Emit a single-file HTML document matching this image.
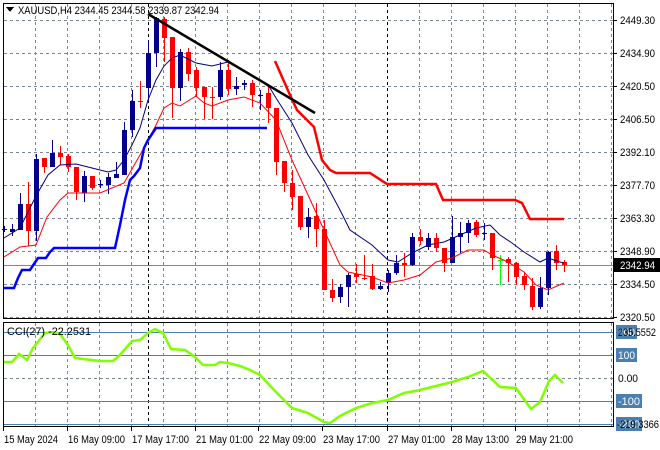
<!DOCTYPE html>
<html><head><meta charset="utf-8"><style>
html,body{margin:0;padding:0;background:#fff;width:660px;height:450px;overflow:hidden}
svg{display:block;font-family:"Liberation Sans",sans-serif}
</style></head><body>
<svg id="s" width="660" height="450" viewBox="0 0 660 450" shape-rendering="crispEdges">
<rect width="660" height="450" fill="#fff"/>
<g id="grid" stroke="#7a8794" stroke-dasharray="3,3" stroke-width="1"></g>
<line x1="148.5" y1="4" x2="148.5" y2="427" stroke="#000" stroke-dasharray="3,3"/>
<line x1="387.5" y1="4" x2="387.5" y2="427" stroke="#000" stroke-dasharray="3,3"/>
<line x1="4" y1="265.5" x2="613" y2="265.5" stroke="#7f8a94"/>
<g id="lv" stroke="#4a7fb0"></g>
<g id="cd"></g>
<g shape-rendering="auto" fill="none">
<polyline id="bma" stroke="#000080" stroke-width="1"/>
<polyline id="rma" stroke="#ff0000" stroke-width="1"/>
<polyline id="bst" stroke="#0000ff" stroke-width="2.5"/>
<polyline id="rst" stroke="#ff0000" stroke-width="2.5"/>
<line x1="148" y1="14" x2="315" y2="113" stroke="#000" stroke-width="2.5"/>
<polyline id="cci" stroke="#7fff00" stroke-width="2.5"/>
</g>
<rect x="3.5" y="3.5" width="610" height="315" fill="none" stroke="#000"/>
<rect x="3.5" y="322.5" width="610" height="104" fill="none" stroke="#000"/>
<g id="ax" font-size="11" fill="#000"></g>
<polygon points="6,7 14,7 10,12" fill="#000"/>
<text x="18" y="14" font-size="11" textLength="201" lengthAdjust="spacingAndGlyphs">XAUUSD,H4  2344.45 2344.58 2339.87 2342.94</text>
<text x="7" y="335" font-size="11" textLength="84" lengthAdjust="spacingAndGlyphs">CCI(27) -22.2531</text>
</svg>
<script>
const NS="http://www.w3.org/2000/svg";
function el(p,t,a,txt){const e=document.createElementNS(NS,t);for(const k in a)e.setAttribute(k,a[k]);if(txt!==undefined)e.textContent=txt;p.appendChild(e);return e;}
const g=document.getElementById('grid');
const hy=[20,53,86,119,152,185,218,251,284,317];
hy.forEach(y=>el(g,'line',{x1:4,x2:613,y1:y+.5,y2:y+.5}));
for(let x=35;x<613;x+=32){el(g,'line',{x1:x+.5,x2:x+.5,y1:4,y2:318});el(g,'line',{x1:x+.5,x2:x+.5,y1:323,y2:426});}
el(g,'line',{x1:4,x2:613,y1:378.5,y2:378.5});
const lv=document.getElementById('lv');
[332,355,401,424].forEach(y=>el(lv,'line',{x1:4,x2:613,y1:y+.5,y2:y+.5}));
const C=[
[230,229,226,232,'b'],[232,229,224,236,'b'],[230,204,193,230,'b'],[204,231,182,246,'r'],[231,159,154,241,'b'],
[158,167,158,173,'r'],[167,153,140,167,'b'],[153,157,146,165,'r'],[156,167,154,172,'r'],[167,192,167,200,'r'],
[193,176,171,202,'b'],[176,188,176,190,'r'],[185,184,180,188,'b'],[185,177,173,194,'b'],[178,174,162,178,'b'],
[175,130,122,175,'b'],[130,101,90,137,'b'],[101,102,81,108,'r'],[88,53,40,100,'b'],[53,18,17,67,'b'],
[19,38,17,62,'r'],[37,88,37,118,'r'],[88,52,49,101,'b'],[52,74,48,81,'r'],[70,88,67,97,'r'],
[87,97,87,119,'r'],[97,98,87,119,'r'],[97,70,62,100,'b'],[70,89,60,95,'r'],[89,86,77,95,'b'],
[85,83,80,90,'b'],[83,95,80,107,'r'],[95,95,90,110,'b'],[93,108,87,123,'r'],[108,162,108,175,'r'],
[161,183,161,192,'r'],[183,197,170,210,'r'],[196,227,196,230,'r'],[227,217,208,238,'b'],[216,229,203,247,'r'],
[229,290,220,290,'r'],[290,298,279,302,'r'],[297,287,284,303,'b'],[287,275,273,307,'b'],[274,277,264,283,'r'],
[278,279,255,280,'r'],[276,289,264,290,'r'],[289,286,282,290,'b'],[283,273,270,292,'b'],[273,263,255,275,'b'],
[263,265,253,277,'r'],[265,237,233,266,'b'],[237,241,229,245,'r'],[247,238,233,250,'b'],[238,248,233,252,'r'],
[248,263,248,272,'r'],[263,237,216,263,'b'],[237,233,222,253,'b'],[233,223,220,243,'b'],[222,235,220,237,'r'],
[233,233,223,240,'b'],[233,258,233,270,'r'],[260,260,255,285,'g'],[259,263,257,282,'r'],[263,277,262,285,'r'],
[276,285,273,290,'r'],[286,307,278,310,'r'],[307,288,277,309,'b'],[288,252,251,295,'b'],[251,263,245,270,'r'],
[262,265,260,272,'r']];
const cd=document.getElementById('cd');
const col={b:'#00008b',r:'#ff0000',g:'#00ff00'};
C.forEach((c,k)=>{const x=4+8*k;const cl=col[c[4]];
el(cd,'rect',{x:x,y:c[2],width:1,height:Math.max(1,c[3]-c[2]),fill:cl});
const t=Math.min(c[0],c[1]),b=Math.max(c[0],c[1]);
if(b-t<=1) el(cd,'rect',{x:x-2,y:t,width:5,height:1,fill:cl});
else el(cd,'rect',{x:x-2,y:t,width:5,height:b-t,fill:cl});});
function pl(id,pts){document.getElementById(id).setAttribute('points',pts.map(p=>p.join(',')).join(' '));}
pl('bma',[[4,238],[20,228],[36,196],[48,175],[60,165],[76,164],[92,168],[108,172],[116,170],[124,160],[132,145],[140,128],[148,100],[156,80],[164,66],[172,58],[180,55],[196,63],[212,66],[228,62],[244,70],[260,80],[270,88],[276,98],[292,123],[308,155],[324,180],[340,210],[350,230],[372,245],[388,260],[398,262],[412,253],[428,245],[444,242],[460,235],[476,228],[490,225],[500,235],[512,243],[524,252],[540,262],[548,258],[560,262],[564,263]]);
pl('rma',[[4,257],[20,247],[36,245],[47,217],[60,200],[68,193],[100,193],[124,183],[140,155],[156,125],[164,108],[172,103],[180,106],[196,96],[204,103],[212,106],[228,100],[244,97],[260,103],[276,120],[292,160],[308,195],[324,230],[340,265],[348,272],[372,277],[388,283],[404,280],[420,275],[436,262],[452,258],[468,250],[484,250],[492,255],[508,262],[524,272],[536,285],[548,290],[564,283]]);
pl('bst',[[4,288],[14,288],[18,278],[22,270],[30,270],[34,264],[38,258],[46,258],[50,252],[54,248],[115,248],[120,225],[125,200],[130,180],[134,176],[140,168],[144,148],[148,140],[152,134],[156,128],[267,128]]);
pl('rst',[[275,61],[290,95],[297,110],[314,127],[322,160],[330,170],[336,173],[370,173],[387,184],[436,184],[443,200],[515,200],[522,203],[530,219],[564,219]]);
pl('cci',[[4,362],[12,362],[19,354],[27,360],[33,348],[45,333],[53,332],[60,334],[68,345],[75,358],[83,359],[100,361],[113,361],[120,355],[132,341],[140,340],[148,333],[155,329],[163,333],[171,349],[185,350],[195,357],[203,365],[215,365],[220,362],[228,363],[240,366],[250,370],[260,375],[276,392],[292,408],[308,413],[324,422],[330,423],[340,416],[356,408],[372,403],[388,400],[404,393],[420,390],[436,386],[452,382],[468,377],[483,371],[500,387],[516,388],[531,409],[540,402],[549,381],[555,375],[563,383]]);
const ax=document.getElementById('ax');
const pr=['2449.30','2434.90','2420.50','2406.50','2392.10','2377.70','2363.30','2348.90','2334.50','2320.50'];
pr.forEach((t,i)=>{el(ax,'line',{x1:613,x2:617,y1:hy[i]+.5,y2:hy[i]+.5,stroke:'#000'});el(ax,'text',{x:620,y:hy[i]+4,textLength:35,lengthAdjust:'spacingAndGlyphs'},t);});
el(ax,'rect',{x:614,y:258,width:46,height:14,fill:'#000'});
el(ax,'text',{x:620,y:269,fill:'#fff',textLength:35,lengthAdjust:'spacingAndGlyphs'},'2342.94');
[[332,'200'],[355,'100'],[401,'-100'],[424,'-200']].forEach(a=>{const w=a[1].length*5+6;el(ax,'rect',{x:616,y:a[0]-7,width:w,height:14,fill:'#4a7fb0'});el(ax,'text',{x:618,y:a[0]+4,fill:'#fff',textLength:w-4,lengthAdjust:'spacingAndGlyphs'},a[1]);});
el(ax,'text',{x:618,y:382,textLength:20,lengthAdjust:'spacingAndGlyphs'},'0.00');
el(ax,'text',{x:618,y:336,textLength:38,lengthAdjust:'spacingAndGlyphs'},'235.5552');
el(ax,'text',{x:617,y:428,textLength:42,lengthAdjust:'spacingAndGlyphs'},'-219.3366');
const tl=[[3,'15 May 2024',54],[67,'16 May 09:00',57],[131,'17 May 17:00',57],[195,'21 May 01:00',57],[258,'22 May 09:00',57],[322,'23 May 17:00',57],[387,'27 May 01:00',57],[451,'28 May 13:00',57],[515,'29 May 21:00',57]];
tl.forEach(a=>{el(ax,'line',{x1:a[0]+.5,x2:a[0]+.5,y1:427,y2:431,stroke:'#000'});el(ax,'text',{x:a[0]+1,y:443,textLength:a[2],lengthAdjust:'spacingAndGlyphs'},a[1]);});
</script>
</body></html>
